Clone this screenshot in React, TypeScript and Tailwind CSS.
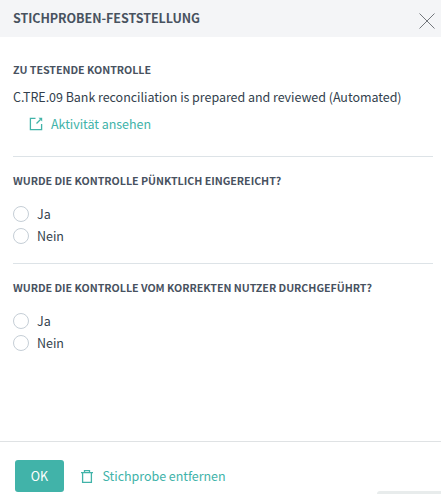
import type { ReactNode } from 'react';

interface QuestionProps {
  name: string;
  title: string;
}

function SectionTitle({ children }: { children: ReactNode }) {
  return (
    <h2 className="whitespace-nowrap text-[10.7px] leading-4 font-bold tracking-[-0.035px] text-[#48525f]">
      {children}
    </h2>
  );
}

function Option({ name, label }: { name: string; label: string }) {
  return (
    <label className="flex h-[22px] items-center gap-2">
      <input
        type="radio"
        name={name}
        className="size-4 appearance-none rounded-full border border-[#c5ced6] bg-white checked:border-4 checked:border-[#41b3a9]"
      />
      <span>{label}</span>
    </label>
  );
}

function Question({ name, title }: QuestionProps) {
  return (
    <section className="h-[107px] border-t border-[#dde3e7] pt-4">
      <SectionTitle>{title}</SectionTitle>
      <div className="mt-[14px]">
        <Option name={name} label="Ja" />
        <Option name={name} label="Nein" />
      </div>
    </section>
  );
}

function OpenIcon() {
  return (
    <svg width="14" height="14" viewBox="0 0 14 14" fill="none" stroke="currentColor" strokeWidth="1.3">
      <path d="M6.5 1.4H1.4v11.2h11.2V7M7.5 6.5l4-4" />
      <path d="M9.5 .8h3.7v3.7z" fill="currentColor" stroke="none" />
    </svg>
  );
}

function TrashIcon() {
  return (
    <svg width="12" height="13" viewBox="0 0 12 13" fill="none" stroke="currentColor" strokeWidth="1.3">
      <path d="M0 2.6h12M3.5 2.6V.6h5v2M1.6 2.6v9.8h8.8V2.6" />
    </svg>
  );
}

export default function App() {
  return (
    <div className="flex h-[494px] w-[441px] flex-col overflow-hidden bg-white font-['Noto_Sans_CJK_SC',sans-serif] text-[12.5px] leading-5 tracking-[-0.04px] text-[#333f4d]">
      <header className="flex h-[37px] shrink-0 items-center justify-between bg-[#f4f5f7] pr-[6px] pl-[13px]">
        <h1 className="pb-px font-bold tracking-[-0.06px] text-[#48525f]">STICHPROBEN-FESTSTELLUNG</h1>
        <button aria-label="Schließen" className="mt-[5px]">
          <svg width="16" height="16" viewBox="0 0 16 16" stroke="#73777c">
            <path d="M.5.5l15 15M15.5.5l-15 15" />
          </svg>
        </button>
      </header>

      <main className="grow pr-2 pl-[13px]">
        <section className="h-[119px] pt-[25px]">
          <SectionTitle>ZU TESTENDE KONTROLLE</SectionTitle>
          <p className="mt-[9px] whitespace-nowrap">
            C.TRE.09 Bank reconciliation is prepared and reviewed (Automated)
          </p>
          <button className="mt-[7px] ml-4 flex items-center gap-2 text-[#41b3a9]">
            <OpenIcon />
            <span>Aktivität ansehen</span>
          </button>
        </section>
        <Question name="on-time" title="WURDE DIE KONTROLLE PÜNKTLICH EINGEREICHT?" />
        <Question name="correct-user" title="WURDE DIE KONTROLLE VOM KORREKTEN NUTZER DURCHGEFÜHRT?" />
      </main>

      <footer className="relative flex h-[53px] shrink-0 items-start border-t border-[#dfe2e4] pt-[18px] pl-[15px]">
        <button className="h-8 w-[49px] rounded-[3px] bg-[#41b3a9] text-white">OK</button>
        <button className="ml-[17px] flex h-8 items-center gap-[9.5px] text-[#41b3a9]">
          <TrashIcon />
          <span>Stichprobe entfernen</span>
        </button>
        <div className="absolute right-0 bottom-0 h-[3px] w-16 rounded-tl-[6px] bg-[#e8ecec]" />
      </footer>
    </div>
  );
}
